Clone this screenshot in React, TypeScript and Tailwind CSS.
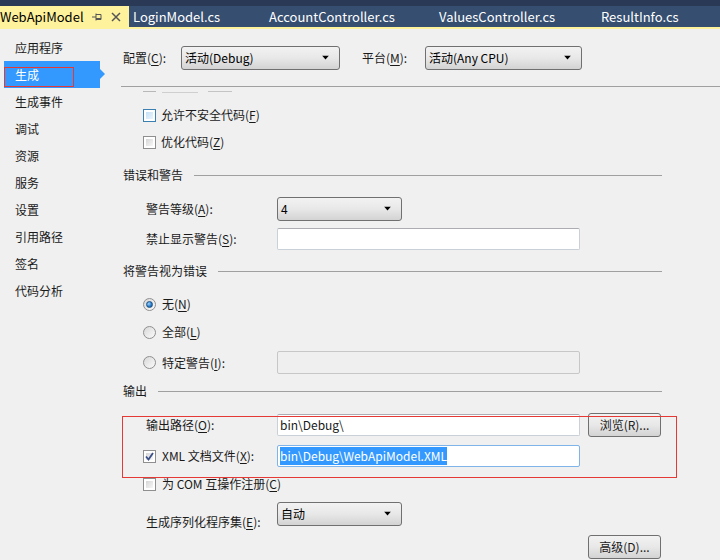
import type { ReactNode } from "react";

const font = { fontFamily: '"Noto Sans CJK SC", "Microsoft YaHei", sans-serif' };

function Arrow() {
  return (
    <svg width="8" height="5" viewBox="0 0 8 5" className="absolute right-[9px] top-1/2 -translate-y-1/2">
      <path d="M0 0 H7 L3.5 4 Z" fill="#000" />
    </svg>
  );
}

function Select({ value, width }: { value: string; width: string }) {
  return (
    <div
      className={`relative flex h-[24px] items-center rounded-[3px] border border-[#707070] bg-linear-to-b from-[#f2f2f2] via-[#e8e8e8] to-[#d3d3d3] pl-[3px] text-[12px] text-black ${width}`}
    >
      {value}
      <Arrow />
    </div>
  );
}

function Input({ children, disabled }: { children?: ReactNode; disabled?: boolean }) {
  return (
    <div
      className={`flex h-[22px] w-[303px] items-center rounded-[2px] border pl-[2px] text-[12px] ${
        disabled ? "h-[23px] border-[#c7c7c7] bg-[#efefef]" : "border-[#c9d0d8] border-t-[#abadb3] bg-white"
      }`}
    >
      {children}
    </div>
  );
}

function Checkbox({ checked, hover }: { checked?: boolean; hover?: boolean }) {
  return (
    <div
      className={`flex h-[13px] w-[13px] shrink-0 items-center justify-center border ${
        hover ? "border-[#3c7fb1]" : "border-[#8f8f8f]"
      } bg-white p-[2px]`}
    >
      <div
        className={`relative h-full w-full ${
          hover ? "bg-linear-to-br from-[#c4e0f6] to-[#eaf5fd]" : "bg-linear-to-br from-[#d6d6d6] to-[#f7f7f7]"
        }`}
      >
        {checked && (
          <svg width="11" height="11" viewBox="0 0 11 11" className="absolute -left-[2px] -top-[2px]">
            <path d="M2 5.5 L4.5 8.5 L9 2" stroke="#3a4f8a" strokeWidth="1.8" fill="none" />
          </svg>
        )}
      </div>
    </div>
  );
}

function Radio({ checked }: { checked?: boolean }) {
  return (
    <div className="flex h-[13px] w-[13px] shrink-0 items-center justify-center rounded-full border border-[#8f8f8f] bg-linear-to-br from-[#d8d8d8] to-[#fbfbfb]">
      {checked && (
        <div className="h-[7px] w-[7px] rounded-full border border-[#1c5180] bg-[radial-gradient(circle_at_35%_35%,#9bd3ff,#2478c7_60%,#144f8a)]" />
      )}
    </div>
  );
}

function Header({ label }: { label: string }) {
  return (
    <div className="flex h-[20px] w-[541px] items-center pl-[2px] text-[12px]">
      <span>{label}</span>
      <div className="ml-[11px] h-px flex-1 bg-[#a0a0a0]" />
    </div>
  );
}

function Button({ label }: { label: string }) {
  return (
    <div className="flex h-[24px] w-[73px] items-center justify-center rounded-[3px] border border-[#707070] bg-linear-to-b from-[#f2f2f2] via-[#e8e8e8] to-[#d3d3d3] text-[12px]">
      {label}
    </div>
  );
}

const U = ({ c }: { c: string }) => <span className="underline underline-offset-2">{c}</span>;

const nav = ["应用程序", "生成", "生成事件", "调试", "资源", "服务", "设置", "引用路径", "签名", "代码分析"];

export default function App() {
  return (
    <div className="h-[560px] w-[720px] overflow-hidden bg-[#f0f0f0] text-[#1a1a1a]" style={font}>
      {/* tab strip */}
      <div className="h-[6px] bg-[#2a3955]" />
      <div className="flex h-[21px] items-center bg-[#364e6f] text-[13px] text-white">
        <div className="flex h-full w-[129px] items-center bg-[#fff29d] text-black">
          <span className="w-[91px]">WebApiModel</span>
          <svg width="12" height="12" viewBox="0 0 12 12" className="mr-[8px]">
            <path d="M1 6 H5 M5 2.5 V9.5 M5 3.5 H10 V8.5 H5 M5 7.5 H10" stroke="#555" strokeWidth="1" fill="none" />
          </svg>
          <svg width="10" height="10" viewBox="0 0 10 10">
            <path d="M1 1 L9 9 M9 1 L1 9" stroke="#555" strokeWidth="1.5" />
          </svg>
        </div>
        <span className="w-[140px] pl-[4px]">LoginModel.cs</span>
        <span className="w-[170px]">AccountController.cs</span>
        <span className="w-[162px]">ValuesController.cs</span>
        <span>ResultInfo.cs</span>
      </div>
      <div className="h-[2px] bg-[#fff29d]" />

      <div className="flex">
        {/* sidebar */}
        <div className="relative w-[121px] shrink-0 pl-[4px] pt-[5px] text-[12px]">
          {nav.map((n) => (
            <div
              key={n}
              className={`relative flex h-[27px] w-[96px] items-center pl-[11px] ${
                n === "生成" ? "bg-[#3399ff] text-white" : ""
              }`}
            >
              {n}
              {n === "生成" && (
                <>
                  <svg width="7" height="12" viewBox="0 0 7 12" className="absolute -right-[6px] top-[7px]">
                    <path d="M0 0 L6 6 L0 12 Z" fill="#3399ff" />
                  </svg>
                  <div className="absolute left-0 top-[6px] h-[20px] w-[70px] border border-[#e53935]" />
                </>
              )}
            </div>
          ))}
        </div>

        {/* content */}
        <div className="relative flex-1 text-[12px]">
          <div className="mt-[17px] flex h-[24px] items-center">
            <span className="w-[60px] pl-[2px]">
              配置(<U c="C" />):
            </span>
            <Select value="活动(Debug)" width="w-[159px]" />
            <span className="ml-[22px] w-[63px]">
              平台(<U c="M" />):
            </span>
            <Select value="活动(Any CPU)" width="w-[157px]" />
          </div>
          <div className="mt-[16px] h-px bg-[#a0a0a0]" />

          {/* scrolled-off row: only its bottom edge shows */}
          <div className="mt-[4px] flex h-[2px] items-start pl-[22px]">
            <div className="h-px w-[13px] bg-[#b8b8b8]" />
            <div className="ml-[6px] mt-px h-px w-[36px] bg-[#cfcfcf]" />
            <div className="ml-[10px] h-px w-[24px] bg-[#c4c4c4]" />
          </div>

          <div className="mt-[12px] flex h-[20px] items-center pl-[22px]">
            <Checkbox hover />
            <span className="ml-[5px]">
              允许不安全代码(<U c="F" />)
            </span>
          </div>
          <div className="mt-[7px] flex h-[20px] items-center pl-[22px]">
            <Checkbox />
            <span className="ml-[5px]">
              优化代码(<U c="Z" />)
            </span>
          </div>

          <div className="mt-[13px]">
            <Header label="错误和警告" />
          </div>
          <div className="mt-[12px] flex h-[24px] items-center pl-[25px]">
            <span className="w-[131px]">
              警告等级(<U c="A" />):
            </span>
            <Select value="4" width="w-[125px]" />
          </div>
          <div className="mt-[7px] flex h-[22px] items-center pl-[25px]">
            <span className="w-[131px]">
              禁止显示警告(<U c="S" />):
            </span>
            <Input />
          </div>

          <div className="mt-[11px]">
            <Header label="将警告视为错误" />
          </div>
          <div className="mt-[13px] flex h-[20px] items-center pl-[22px]">
            <Radio checked />
            <span className="ml-[6px]">
              无(<U c="N" />)
            </span>
          </div>
          <div className="mt-[8px] flex h-[20px] items-center pl-[22px]">
            <Radio />
            <span className="ml-[6px]">
              全部(<U c="L" />)
            </span>
          </div>
          <div className="mt-[9px] flex h-[23px] items-center pl-[22px]">
            <Radio />
            <span className="ml-[6px] w-[115px]">
              特定警告(<U c="I" />):
            </span>
            <Input disabled />
          </div>

          <div className="mt-[7px]">
            <Header label="输出" />
          </div>
          <div className="mt-[12px] flex h-[24px] items-center pl-[25px]">
            <span className="w-[131px]">
              输出路径(<U c="O" />):
            </span>
            <Input>bin\Debug\</Input>
            <div className="ml-[8px]">
              <Button label="浏览(R)..." />
            </div>
          </div>
          <div className="mt-[8px] flex h-[22px] items-center pl-[22px]">
            <Checkbox checked />
            <span className="ml-[6px] w-[115px]">
              XML 文档文件(<U c="X" />):
            </span>
            <div className="flex h-[22px] w-[303px] items-center rounded-[2px] border border-[#7eb4ea] bg-white pl-[2px]">
              <span className="bg-[#3399ff] text-white">bin\Debug\WebApiModel.XML</span>
            </div>
          </div>
          <div className="mt-[7px] flex h-[20px] items-center pl-[22px]">
            <Checkbox />
            <span className="ml-[6px]">
              为 COM 互操作注册(<U c="C" />)
            </span>
          </div>
          <div className="mt-[8px] flex h-[24px] items-start pl-[25px]">
            <span className="mt-[11px] w-[131px]">
              生成序列化程序集(<U c="E" />):
            </span>
            <Select value="自动" width="w-[125px]" />
          </div>
          <div className="mt-[9px] pl-[467px]">
            <Button label="高级(D)..." />
          </div>

          {/* red annotation box */}
          <div className="absolute left-[1px] top-[387px] h-[62px] w-[555px] border border-[#e53935]" />
        </div>
      </div>
    </div>
  );
}
